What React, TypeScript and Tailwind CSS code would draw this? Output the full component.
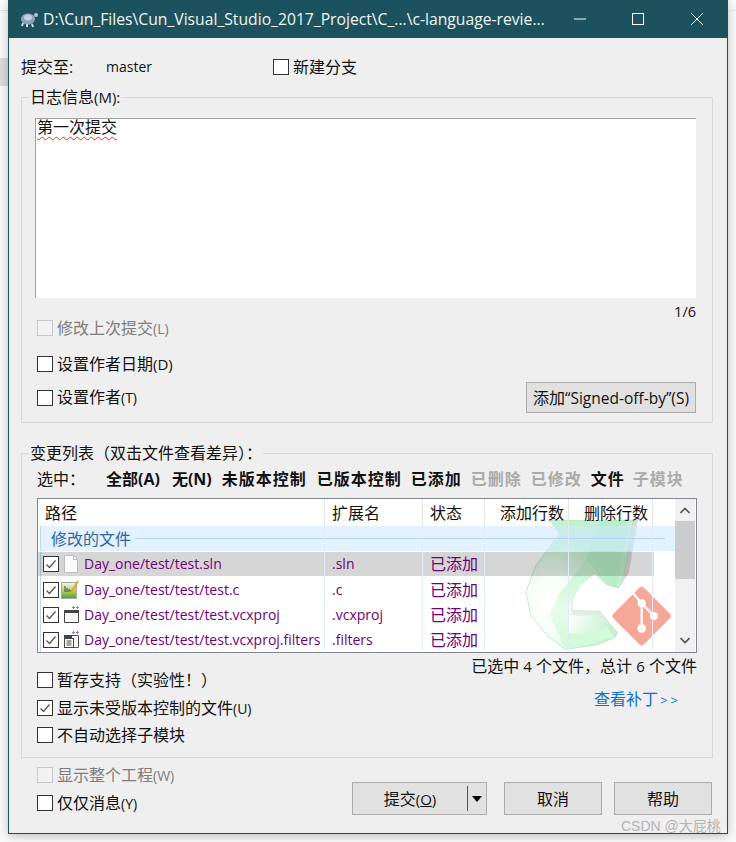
import React from "react";

function Box({ checked, disabled }: { checked?: boolean; disabled?: boolean }) {
  return (
    <span className={`flex h-[16px] w-[16px] shrink-0 items-center justify-center border ${disabled ? "border-[#c8c8c8] bg-[#f2f2f2]" : "border-[#333333] bg-white"}`}>
      {checked && (
        <svg width="12" height="12" viewBox="0 0 12 12" fill="none">
          <path d="M1.5 6.5 L4.5 9.5 L10.5 2.5" stroke="#555555" strokeWidth="1.3" />
        </svg>
      )}
    </span>
  );
}

function Check({ children, checked, disabled, className = "" }: { children: React.ReactNode; checked?: boolean; disabled?: boolean; className?: string }) {
  return (
    <div className={`flex h-[20px] items-center gap-[4px] whitespace-nowrap ${disabled ? "text-[#7d7d7d]" : "text-[#111111]"} ${className}`}>
      <Box checked={checked} disabled={disabled} />
      <span>{children}</span>
    </div>
  );
}

function L({ children }: { children: React.ReactNode }) {
  return <span className="text-[14px]">{children}</span>;
}

const cols = "grid grid-cols-[287px_98px_62px_84px_84px]";

function FileIcon({ kind }: { kind: number }) {
  if (kind === 0)
    return (
      <svg width="16" height="19" viewBox="0 0 16 19" fill="none">
        <path d="M1.5 0.5 H10.5 L14.5 4.5 V17.5 H1.5 Z" fill="#fbfbfb" stroke="#bdbdbd" />
        <path d="M10.5 0.5 V4.5 H14.5" stroke="#bdbdbd" />
      </svg>
    );
  if (kind === 1)
    return (
      <svg className="-ml-[2px]" width="19" height="20" viewBox="0 0 19 20" fill="none">
        <defs>
          <linearGradient id="g1" x1="0" y1="0" x2="0" y2="1">
            <stop offset="0" stopColor="#f4f4f4" />
            <stop offset="0.5" stopColor="#b4d66a" />
            <stop offset="1" stopColor="#4f9e2c" />
          </linearGradient>
        </defs>
        <rect x="0.5" y="2.5" width="15" height="16" fill="url(#g1)" stroke="#a8a8a8" />
        <path d="M4 6 V12 M6 8 V12 M8 9 V12 M10 10 V12" stroke="#444444" />
        <path d="M10 13 L17 1" stroke="#e8a020" strokeWidth="2" />
      </svg>
    );
  if (kind === 2)
    return (
      <svg width="17" height="19" viewBox="0 0 17 19" fill="none">
        <path d="M1.5 5.5 H15.5 V17.5 H1.5 Z" fill="#fafafa" stroke="#444444" />
        <rect x="1" y="5" width="15" height="3" fill="#444444" />
        <path d="M9 2.5 H12 M10.5 1 V4 M13 2.5 H16 M14.5 1 V4" stroke="#a66fc0" />
      </svg>
    );
  return (
    <svg width="17" height="19" viewBox="0 0 17 19" fill="none">
      <path d="M1.5 5.5 H15.5 V17.5 H1.5 Z" fill="#fafafa" stroke="#555555" />
      <rect x="1" y="5" width="8" height="3" fill="#444444" />
      <rect x="1.5" y="8.5" width="9" height="9" fill="#ffffff" stroke="#444444" />
      <path d="M3.5 11 H8.5 M3.5 13 H8.5 M3.5 15 H8.5" stroke="#444444" />
      <path d="M9 2.5 H12 M10.5 1 V4 M13 2.5 H16 M14.5 1 V4" stroke="#a66fc0" />
    </svg>
  );
}

const files = [
  { name: "Day_one/test/test.sln", ext: ".sln" },
  { name: "Day_one/test/test/test.c", ext: ".c" },
  { name: "Day_one/test/test/test.vcxproj", ext: ".vcxproj" },
  { name: "Day_one/test/test/test.vcxproj.filters", ext: ".filters" },
];

function Watermark() {
  return (
    <svg className="pointer-events-none absolute left-[462px] top-[21px]" width="200" height="135" viewBox="0 0 600 405" fill="none">
      <defs>
        <radialGradient id="arrow" gradientUnits="userSpaceOnUse" cx="150" cy="255" r="200">
          <stop offset="0" stopColor="#ffffff" />
          <stop offset="0.4" stopColor="#f6fff8" />
          <stop offset="1" stopColor="#c2f2ce" />
        </radialGradient>
        <linearGradient id="shine" gradientUnits="userSpaceOnUse" x1="260" y1="120" x2="190" y2="385">
          <stop offset="0" stopColor="#c2f4ce" />
          <stop offset="0.6" stopColor="#e6fdea" />
          <stop offset="1" stopColor="#d0fad8" />
        </linearGradient>
      </defs>
      <path d="M150 0 L400 0 L372 165 L355 204 L322 195 L284 160 L240 195 L216 240 L216 272 L300 274 L352 338 L345 352 L290 375 L195 388 L140 345 L92 285 L78 215 L108 135 L178 42 Z" fill="url(#arrow)" stroke="#b4dcbd" strokeWidth="2" />
      <path d="M258 120 L320 195 L350 200 L386 0 L300 0 Z" fill="#a8eabc" opacity="0.45" />
      <path d="M258 120 L175 225 L150 285 L195 386 L205 340 L206 260 L240 195 L285 160 Z" fill="url(#shine)" />
      <path d="M205 340 L195 386 L345 352 L320 320 Q270 345 205 340 Z" fill="#d2fadb" />
      <path d="M400 0 L372 165 L357 204 L386 160 L414 0 Z" fill="#b8b8b8" opacity="0.5" />
      <path d="M216 272 L300 274 L335 316 L285 285 Q240 290 212 285 Z" fill="#e6e6e6" opacity="0.7" />
      <rect x="360" y="223" width="130" height="130" rx="10" transform="rotate(45 425 288)" fill="#f7a797" />
      <path d="M398 218 L425 250 V325 M425 250 L462 288" stroke="#ffffff" strokeWidth="7" />
      <circle cx="425" cy="250" r="12" fill="#ffffff" />
      <circle cx="462" cy="288" r="12" fill="#ffffff" />
      <circle cx="425" cy="325" r="13" fill="#ffffff" />
    </svg>
  );
}

export default function App() {
  return (
    <div className="relative flex h-[842px] w-[736px] overflow-hidden bg-[#fbfbfb] text-[16px] leading-[20px] text-[#111111] font-['Open_Sans','Noto_Sans_CJK_SC',sans-serif]">
      <div className="flex w-[8px] shrink-0 flex-col">
        <div className="mt-[10px] h-px bg-[#e2e2e2]" />
        <div className="mt-[47px] h-[28px] bg-[#dcdcdc]" />
      </div>
      <div className="flex h-[834px] w-[720px] shrink-0 flex-col border-x border-b border-[#1b525d] bg-[#efefef] shadow-[0_2px_10px_rgba(0,0,0,0.25)]">
        <div className="-mx-px flex h-[38px] shrink-0 items-center bg-[#1b525d] text-[#f2f6f6]">
          <svg className="ml-[11px]" width="20" height="18" viewBox="0 0 20 18" fill="none">
            <ellipse cx="9" cy="9" rx="7" ry="5.5" fill="#8ea2bb" />
            <ellipse cx="9" cy="7.5" rx="4" ry="3" fill="#c4d0de" />
            <circle cx="17" cy="5" r="2" fill="#b9c2cc" />
            <path d="M4 13 L3 16 M8 14 L8 17 M13 14 L14 17" stroke="#d8dde2" strokeWidth="2" />
          </svg>
          <span className="ml-[4px] w-[510px] whitespace-nowrap text-[15.7px]">D:\Cun_Files\Cun_Visual_Studio_2017_Project\C_...\c-language-revie...</span>
          <svg className="ml-[20px]" width="14" height="14" viewBox="0 0 14 14" fill="none"><path d="M1 7 H13" stroke="#ffffff" /></svg>
          <svg className="ml-[44px]" width="14" height="14" viewBox="0 0 14 14" fill="none"><rect x="1.5" y="1.5" width="11" height="11" stroke="#ffffff" /></svg>
          <svg className="ml-[45px]" width="14" height="14" viewBox="0 0 14 14" fill="none"><path d="M1 1 L13 13 M13 1 L1 13" stroke="#ffffff" /></svg>
        </div>

        <div className="flex flex-col pl-[12px] pr-[14px]">
          <div className="mt-[19px] flex h-[20px] items-center whitespace-nowrap">
            <span className="w-[85px]">提交至:</span>
            <span className="w-[167px] text-[14px]">master</span>
            <Check>新建分支</Check>
          </div>

          <div className="relative mt-[20px] h-[326px] border border-[#d9d9d9] px-[13px] pt-[20px]">
            <div className="absolute left-[7px] top-[-11px] bg-[#efefef] px-px">日志信息<span className="text-[15px]">(M):</span></div>
            <div className="h-[180px] w-[661px] border-l border-t border-[#a0a0a0] bg-white pl-px leading-[17px]">
              <span className="underline decoration-[#e03030] decoration-wavy decoration-1 underline-offset-[3px]">第一次提交</span>
            </div>
            <div className="mt-[7px] h-[13px] w-[661px] text-right text-[14.5px] leading-[14px]">1/6</div>
            <Check disabled className="ml-[2px]">修改上次提交<L>(L)</L></Check>
            <Check className="ml-[2px] mt-[16px]">设置作者日期<span className="text-[15px]">(D)</span></Check>
            <div className="ml-[2px] mt-[8px] flex h-[31px] w-[659px] items-center justify-between">
              <Check>设置作者<L>(T)</L></Check>
              <div className="flex h-[31px] w-[170px] items-center justify-center whitespace-nowrap border border-[#adadad] bg-[#e1e1e1]">添加<span className="text-[15.5px]">“Signed-off-by”(S)</span></div>
            </div>
          </div>

          <div className="relative mt-[30px] h-[305px] border border-[#d9d9d9] pl-[15px] pt-[15px]">
            <div className="absolute left-[7px] top-[-11px] whitespace-nowrap bg-[#efefef] px-px">变更列表（双击文件查看差异）：</div>
            <div className="flex h-[20px] items-center whitespace-nowrap">
              <span className="w-[69px]">选中：</span>
              <div className="flex gap-[10px] font-bold">
                <span>全部(A)</span>
                <span className="ml-[2px]">无(N)</span>
                <span className="tracking-[1px]">未版本控制</span>
                <span className="tracking-[1px]">已版本控制</span>
                <span className="-ml-px tracking-[1px]">已添加</span>
                <span className="-ml-px tracking-[1px] text-[#ababab]">已删除</span>
                <span className="-ml-px tracking-[1px] text-[#ababab]">已修改</span>
                <span className="-ml-px tracking-[1px]">文件</span>
                <span className="-ml-[2px] tracking-[1px] text-[#ababab]">子模块</span>
              </div>
            </div>

            <div className="relative mt-[9px] flex h-[155px] w-[660px] border border-[#828790] bg-white">
              <Watermark />
              <div className="relative w-[637px] shrink-0">
                <div className={`${cols} h-[27px] items-stretch leading-[28px]`}>
                  <div className="border-r border-[#e5e5e5] pl-[7px]">路径</div>
                  <div className="border-r border-[#e5e5e5] pl-[7px]">扩展名</div>
                  <div className="border-r border-[#e5e5e5] pl-[7px]">状态</div>
                  <div className="border-r border-[#e5e5e5] text-right pr-[4px]">添加行数</div>
                  <div className="border-r border-[#e5e5e5] text-right pr-[4px]">删除行数</div>
                </div>
                <div className="ml-[2px] flex h-[25px] items-center border-l border-[#bcdaf6] bg-[#cce8ff]/55 pl-[10px] text-[#33659f]">
                  <span className="whitespace-nowrap">修改的文件</span>
                  <div className="ml-[4px] mr-[10px] h-px flex-1 bg-[#b5d3f2]" />
                </div>
                <div className="ml-[2px] mt-px border-l border-[#bcdaf6] text-[#70007a]">
                  {files.map((f, i) => (
                    <div key={f.name} className={`-ml-[3px] ${cols} ${i === 0 ? "mb-px h-[24px] w-[616px] bg-black/[.16]" : "h-[25px]"} items-center whitespace-nowrap`}>
                      <div className="flex items-center pl-[5px] text-[14px]">
                        <Box checked />
                        <span className="ml-[4px] flex w-[21px] shrink-0 items-center"><FileIcon kind={i} /></span>
                        <span>{f.name}</span>
                      </div>
                      <div className="pl-[7px] text-[14px]">{f.ext}</div>
                      <div className="pl-[7px]">已添加</div>
                    </div>
                  ))}
                </div>
                <div className={`pointer-events-none absolute inset-x-0 bottom-[2px] top-[27px] ${cols}`}>
                  <div className="border-r border-[#e1ecf8]" />
                  <div className="border-r border-[#e1ecf8]" />
                  <div className="border-r border-[#e1ecf8]" />
                  <div className="border-r border-[#e1ecf8]" />
                  <div className="border-r border-[#e1ecf8]" />
                </div>
              </div>
              <div className="relative flex w-[20px] flex-col items-center justify-between bg-[#f0f0f0] py-[8px]">
                <svg width="10" height="7" viewBox="0 0 10 7" fill="none"><path d="M0.5 6 L5 1.5 L9.5 6" stroke="#555555" strokeWidth="1.6" /></svg>
                <div className="absolute left-0 top-[22px] h-[58px] w-[20px] bg-[#cdcdcd]" />
                <svg width="10" height="7" viewBox="0 0 10 7" fill="none"><path d="M0.5 1 L5 5.5 L9.5 1" stroke="#555555" strokeWidth="1.6" /></svg>
              </div>
            </div>

            <div className="h-[17px] w-[660px] whitespace-nowrap text-right leading-[26px]">已选中 <span className="text-[15px]">4</span> 个文件，总计 <span className="text-[15px]">6</span> 个文件</div>
            <div className="flex w-[660px] justify-between">
              <div className="flex flex-col">
                <Check>暂存支持（实验性！）</Check>
                <Check checked className="mt-[8px]">显示未受版本控制的文件<L>(U)</L></Check>
                <Check className="mt-[7px]">不自动选择子模块</Check>
              </div>
              <div className="mr-[16px] mt-[19px] h-[20px] whitespace-nowrap text-[#0a72d8]">查看补丁<span className="ml-[2px] text-[13px] tracking-[3px]">&gt;&gt;</span></div>
            </div>
          </div>

          <div className="flex justify-between pl-[16px]">
            <div className="flex flex-col pt-[7px]">
              <Check disabled>显示整个工程<L>(W)</L></Check>
              <Check className="mt-[8px]">仅仅消息<L>(Y)</L></Check>
            </div>
            <div className="flex pr-px pt-[24px]">
              <div className="flex h-[33px] w-[135px] items-center border border-[#adadad] bg-[#e1e1e1]">
                <div className="w-[114px] text-center">提交<span className="text-[15px]">(<span className="underline">O</span>)</span></div>
                <div className="h-[25px] w-px bg-[#555555]" />
                <div className="ml-[4px] h-0 w-0 border-x-[5px] border-t-[6px] border-x-transparent border-t-black" />
              </div>
              <div className="ml-[17px] flex h-[33px] w-[98px] items-center justify-center border border-[#adadad] bg-[#e1e1e1]">取消</div>
              <div className="ml-[12px] flex h-[33px] w-[98px] items-center justify-center border border-[#adadad] bg-[#e1e1e1]">帮助</div>
            </div>
          </div>
        </div>
      </div>
      <div className="flex flex-1 flex-col">
        <div className="mt-[10px] h-px bg-[#e2e2e2]" />
      </div>
      <div className="absolute left-[621px] top-[817px] whitespace-nowrap text-[14px] leading-[18px] text-[#b4b4b4] font-['Liberation_Sans','Noto_Sans_CJK_SC',sans-serif]">CSDN @大屁桃</div>
    </div>
  );
}
